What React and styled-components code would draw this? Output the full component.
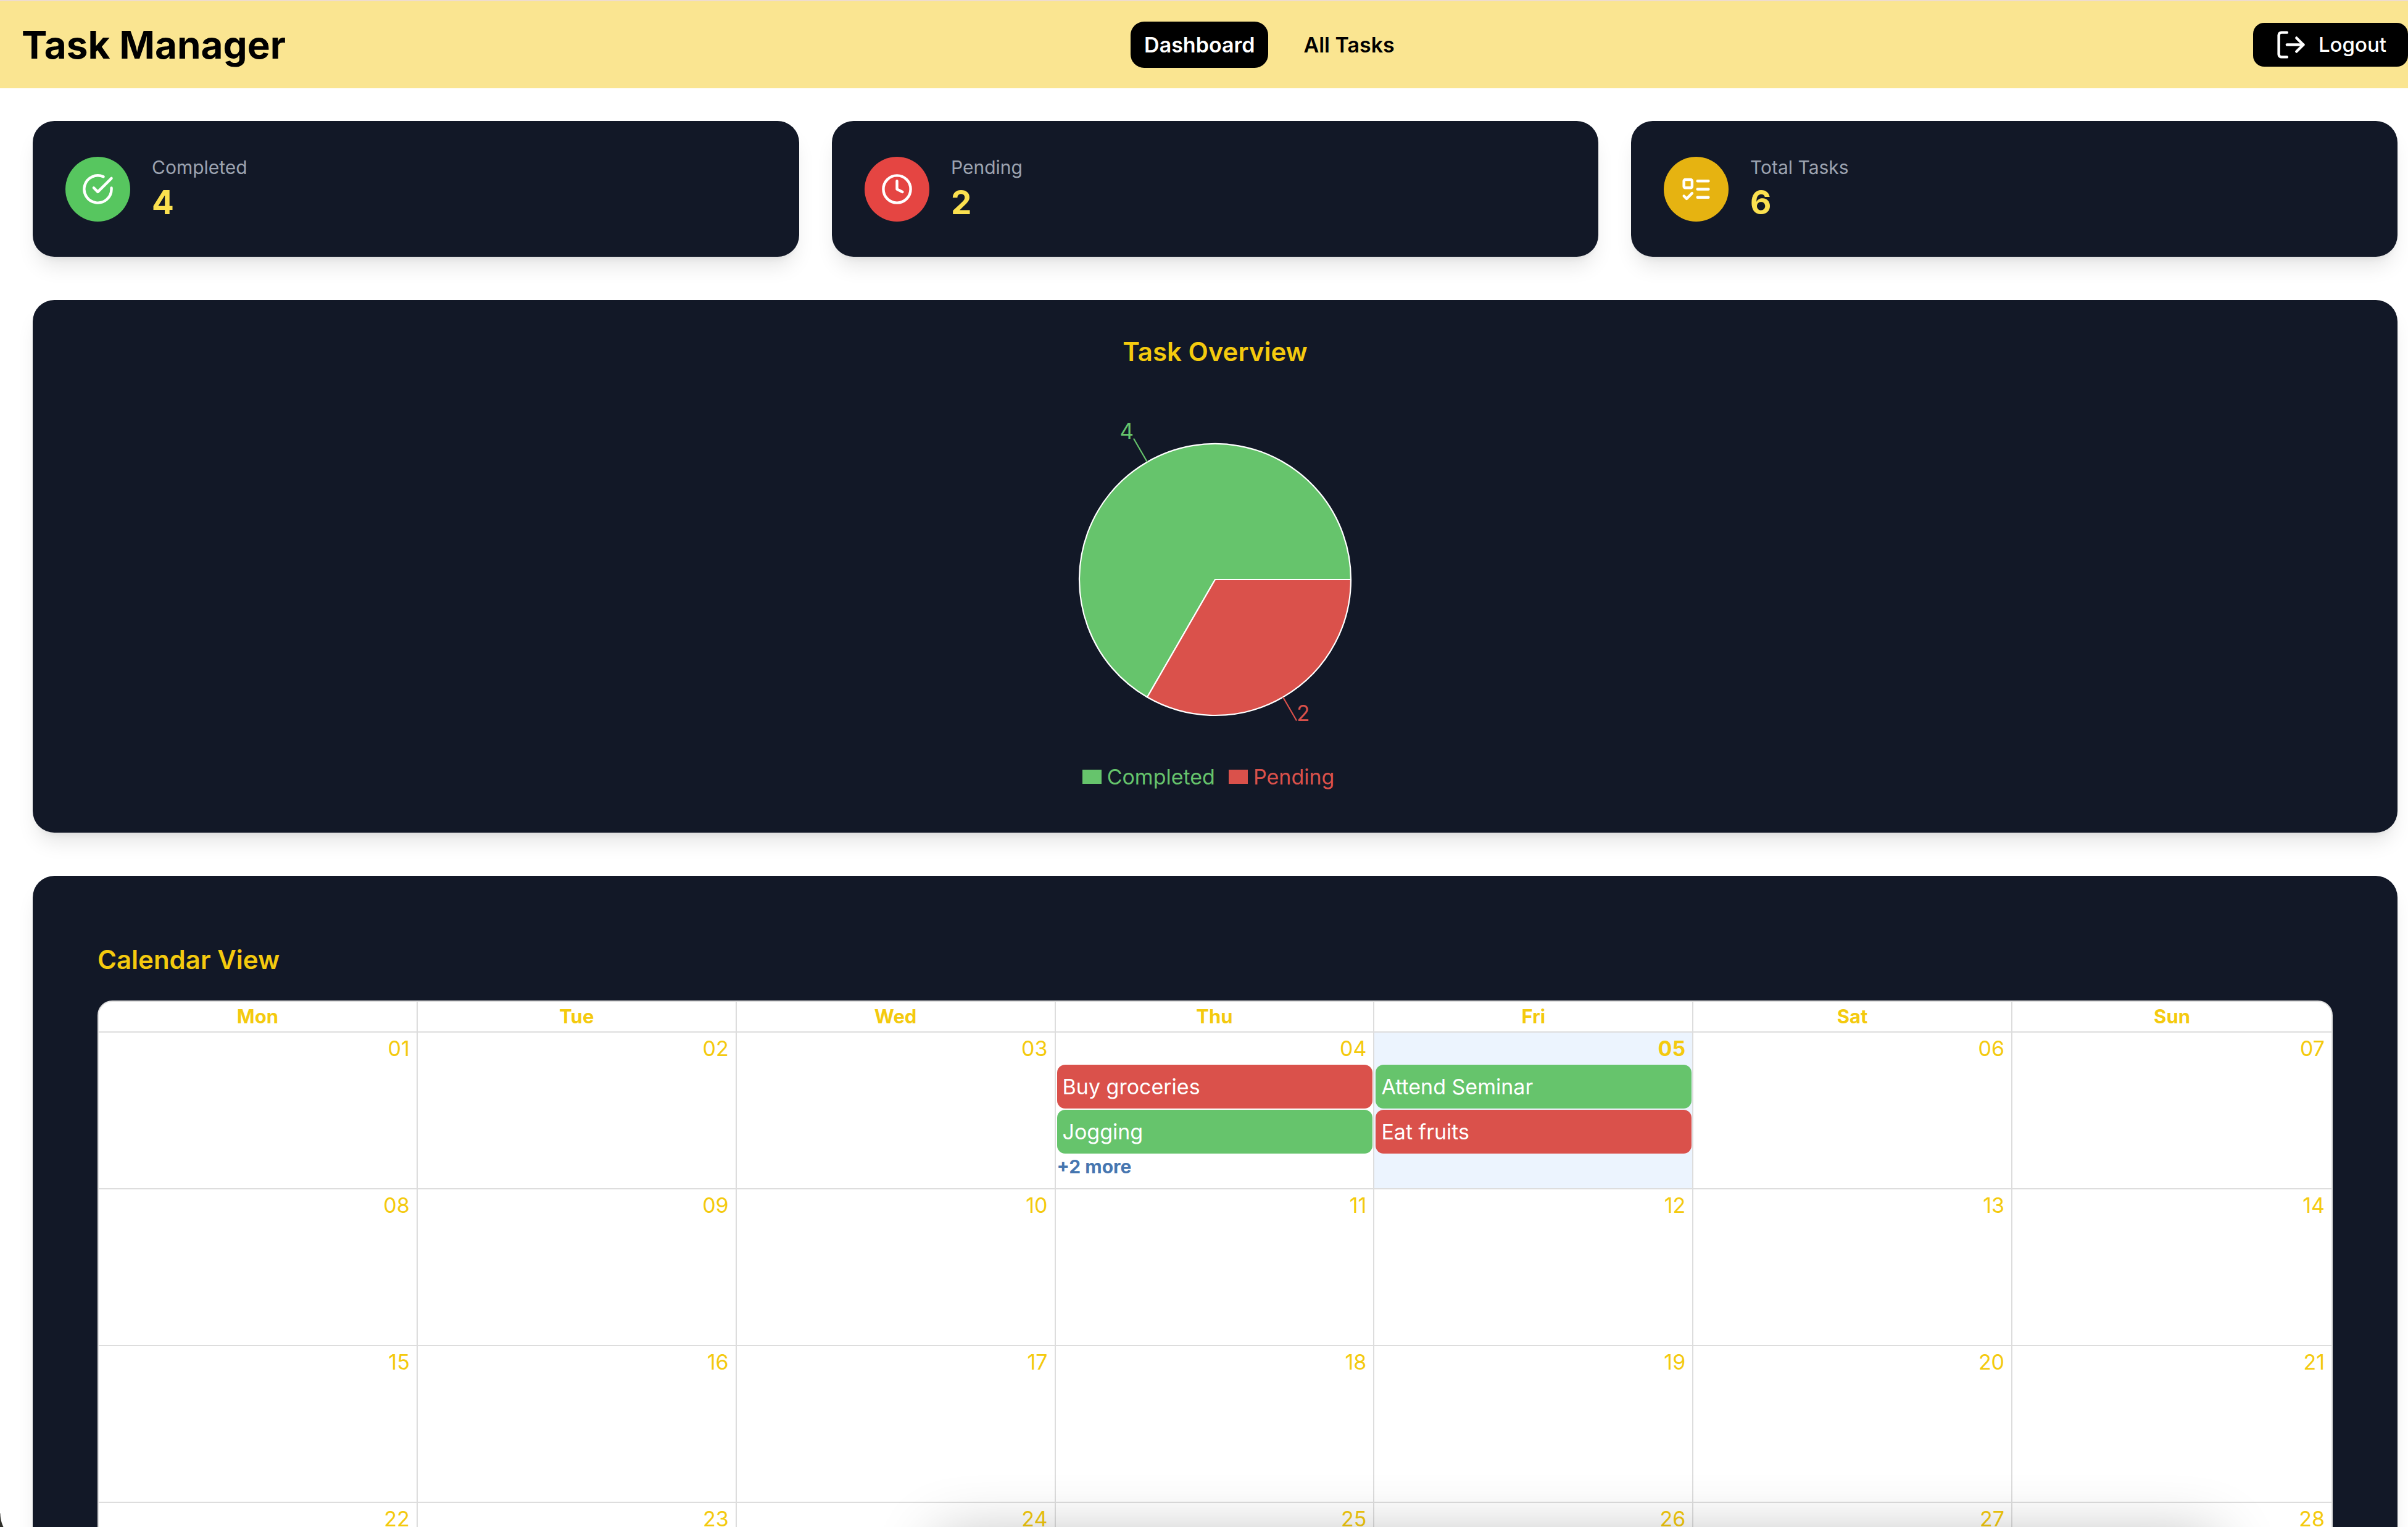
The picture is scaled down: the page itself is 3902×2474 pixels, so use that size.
import React from "react";
import styled, { createGlobalStyle } from "styled-components";

const color = {
  ink: "#121827",
  gold: "#f4ca0e",
  green: "#66c46c",
  red: "#da514b",
  line: "#dddddd",
};

const GlobalStyle = createGlobalStyle`
  *, *::before, *::after { box-sizing: border-box; }
  body {
    margin: 0;
    background: #ffffff;
    font-family: Inter, "Liberation Sans", sans-serif;
    font-size: 34px;
    line-height: 53px;
  }
  button {
    font: inherit;
    border: 0;
    cursor: pointer;
  }
`;

const Page = styled.div`
  position: relative;
  height: 100vh;
  overflow: hidden;
`;

const Header = styled.header`
  display: flex;
  align-items: center;
  justify-content: space-between;
  height: 143px;
  padding-left: 35px;
  border-top: 2px solid #eedccf;
  background: #fae591;
`;

const Brand = styled.h1`
  margin: 0;
  font-size: 62px;
  line-height: 80px;
  font-weight: 700;
  color: #000000;
`;

const Nav = styled.nav`
  display: flex;
  gap: 35px;
`;

const NavLink = styled.a`
  padding: 11px 22px;
  border-radius: 22px;
  font-weight: 600;
  text-decoration: none;
  color: ${(p) => (p.$active ? "#ffffff" : "#000000")};
  background: ${(p) => (p.$active ? "#000000" : "transparent")};
`;

const LogoutButton = styled.button`
  display: flex;
  align-items: center;
  gap: 18px;
  padding: 9px 35px;
  border-radius: 18px;
  font-size: 33px;
  font-weight: 500;
  color: #ffffff;
  background: #000000;
`;

const Icon = styled.svg`
  width: 53px;
  height: 53px;
  flex: none;
  fill: none;
  stroke: #ffffff;
  stroke-width: 2;
  stroke-linecap: round;
  stroke-linejoin: round;
`;

const Main = styled.main`
  display: flex;
  flex-direction: column;
  gap: 70px;
  padding: 53px 17px 53px 53px;
`;

const Card = styled.section`
  border-radius: 35px;
  background: ${color.ink};
  box-shadow: 0 22px 33px -7px rgba(0, 0, 0, 0.1), 0 9px 13px -9px rgba(0, 0, 0, 0.1);
`;

const Stats = styled.div`
  display: grid;
  grid-template-columns: repeat(3, minmax(0, 1fr));
  gap: 53px;
`;

const StatCard = styled(Card)`
  display: flex;
  align-items: center;
  gap: 35px;
  padding: 53px;
`;

const Badge = styled.span`
  display: flex;
  align-items: center;
  justify-content: center;
  width: 105px;
  height: 105px;
  border-radius: 50%;
  background: ${(p) => p.$tone};
`;

const StatLabel = styled.p`
  margin: 0;
  font-size: 30px;
  line-height: 44px;
  color: #9ca3b0;
`;

const StatValue = styled.p`
  margin: 0;
  font-size: 53px;
  line-height: 70px;
  font-weight: 700;
  color: #fbe04f;
`;

const Heading = styled.h2`
  margin: 0 0 35px;
  font-size: 42px;
  line-height: 62px;
  font-weight: 600;
  color: ${color.gold};
`;

const OverviewCard = styled(Card)`
  display: flex;
  flex-direction: column;
  align-items: center;
  padding: 53px 53px 64px;
`;

const Pie = styled.svg`
  display: block;
  width: 660px;
  height: 596px;
  font-size: 35px;
`;

const Legend = styled.ul`
  display: flex;
  margin: 0;
  padding: 0;
  list-style: none;
`;

const LegendItem = styled.li`
  display: flex;
  align-items: center;
  gap: 9px;
  margin-right: 22px;
  color: ${(p) => p.$tone};

  &::before {
    content: "";
    width: 31px;
    height: 23px;
    background: ${(p) => p.$tone};
  }
`;

const CalendarCard = styled(Card)`
  padding: 105px;
`;

const CalendarFrame = styled.div`
  overflow: hidden;
  border: 2px solid ${color.line};
  border-radius: 24px;
  background: #ffffff;
`;

const CalendarTable = styled.table`
  width: 100%;
  table-layout: fixed;
  border-spacing: 0;
  color: ${color.gold};
`;

const DayName = styled.th`
  height: 48px;
  padding: 0;
  font-size: 31px;
  line-height: 44px;
  font-weight: 700;

  &:not(:last-child) {
    border-right: 2px solid ${color.line};
  }
`;

const Day = styled.td`
  height: 254px;
  padding: 0;
  vertical-align: top;
  border-top: 2px solid ${color.line};
  background: ${(p) => (p.$today ? "#ecf4fe" : "transparent")};

  &:not(:last-child) {
    border-right: 2px solid ${color.line};
  }
`;

const DayNumber = styled.div`
  padding-right: 11px;
  line-height: 52px;
  text-align: right;
  font-weight: ${(p) => (p.$today ? 700 : 400)};
`;

const EventList = styled.div`
  display: flex;
  flex-direction: column;
  gap: 2px;
  padding: 0 1px 0 2px;
`;

const EventButton = styled.button`
  height: 71px;
  padding: 0 9px;
  border-radius: 13px;
  text-align: left;
  color: #ffffff;
  background: ${(p) => p.$tone};
`;

const MoreButton = styled.button`
  align-self: flex-start;
  padding: 0;
  font-size: 30px;
  line-height: 38px;
  font-weight: 700;
  color: #4676b0;
  background: transparent;
`;

const DockShadow = styled.div`
  position: absolute;
  left: 39%;
  right: 8%;
  top: 100%;
  height: 100px;
  box-shadow: 0 20px 100px rgba(0, 0, 0, 0.3);
  pointer-events: none;
`;

const WindowCorner = styled.div`
  position: absolute;
  left: 0;
  bottom: -29px;
  width: 51px;
  height: 51px;
  background: radial-gradient(circle at 100% 0, transparent 50px, #2f2f2a 51px);
  pointer-events: none;
`;

const LogoutIcon = () => (
  <Icon viewBox="0 0 24 24" aria-hidden="true">
    <path d="M9 21H5a2 2 0 0 1-2-2V5a2 2 0 0 1 2-2h4" />
    <path d="M16 17l5-5-5-5" />
    <path d="M21 12H9" />
  </Icon>
);

const CheckIcon = () => (
  <Icon viewBox="0 0 24 24" aria-hidden="true">
    <path d="M22 11.08V12a10 10 0 1 1-5.93-9.14" />
    <path d="M9 11l3 3L22 4" />
  </Icon>
);

const ClockIcon = () => (
  <Icon viewBox="0 0 24 24" aria-hidden="true">
    <circle cx="12" cy="12" r="10" />
    <path d="M12 6v6l4 2" />
  </Icon>
);

const ListIcon = () => (
  <Icon viewBox="0 0 24 24" aria-hidden="true">
    <rect x="3" y="5" width="6" height="6" rx="1" />
    <path d="M3 17l2 2 4-4" />
    <path d="M13 6h8" />
    <path d="M13 12h8" />
    <path d="M13 18h8" />
  </Icon>
);

const stats = [
  { label: "Completed", value: 4, tone: "#57c65f", Glyph: CheckIcon },
  { label: "Pending", value: 2, tone: "#e54542", Glyph: ClockIcon },
  { label: "Total Tasks", value: 6, tone: "#e6b311", Glyph: ListIcon },
];

const dayNames = ["Mon", "Tue", "Wed", "Thu", "Fri", "Sat", "Sun"];
const weeks = [0, 1, 2, 3].map((w) => dayNames.map((_, d) => w * 7 + d + 1));
const today = 5;
const events = {
  4: {
    items: [
      { title: "Buy groceries", tone: color.red },
      { title: "Jogging", tone: color.green },
    ],
    more: 2,
  },
  5: {
    items: [
      { title: "Attend Seminar", tone: color.green },
      { title: "Eat fruits", tone: color.red },
    ],
  },
};

const TaskPie = () => (
  <Pie viewBox="0 0 660 596" role="img" aria-label="4 completed, 2 pending">
    <g stroke="#ffffff" strokeWidth="2.2" strokeLinejoin="round">
      <path d="M330 303L550 303A220 220 0 1 0 220 493.5Z" fill={color.green} />
      <path d="M330 303L220 493.5A220 220 0 0 0 550 303Z" fill={color.red} />
    </g>
    <path d="M220 112.5L198 74.5" stroke={color.green} strokeWidth="2.2" />
    <path d="M440 493.5L462 531.5" stroke={color.red} strokeWidth="2.2" />
    <text x="198" y="75" textAnchor="end" fill={color.green}>4</text>
    <text x="462" y="532" fill={color.red}>2</text>
  </Pie>
);

export default function App() {
  return (
    <Page>
      <GlobalStyle />
      <Header>
        <Brand>Task Manager</Brand>
        <Nav>
          <NavLink href="#dashboard" $active aria-current="page">Dashboard</NavLink>
          <NavLink href="#tasks">All Tasks</NavLink>
        </Nav>
        <LogoutButton type="button">
          <LogoutIcon />
          Logout
        </LogoutButton>
      </Header>
      <Main>
        <Stats>
          {stats.map(({ label, value, tone, Glyph }) => (
            <StatCard key={label}>
              <Badge $tone={tone}><Glyph /></Badge>
              <div>
                <StatLabel>{label}</StatLabel>
                <StatValue>{value}</StatValue>
              </div>
            </StatCard>
          ))}
        </Stats>
        <OverviewCard>
          <Heading>Task Overview</Heading>
          <TaskPie />
          <Legend>
            <LegendItem $tone={color.green}>Completed</LegendItem>
            <LegendItem $tone={color.red}>Pending</LegendItem>
          </Legend>
        </OverviewCard>
        <CalendarCard>
          <Heading>Calendar View</Heading>
          <CalendarFrame>
            <CalendarTable>
              <thead>
                <tr>
                  {dayNames.map((name) => (
                    <DayName key={name} scope="col">{name}</DayName>
                  ))}
                </tr>
              </thead>
              <tbody>
                {weeks.map((week) => (
                  <tr key={week[0]}>
                    {week.map((day) => (
                      <Day key={day} $today={day === today}>
                        <DayNumber $today={day === today}>
                          {String(day).padStart(2, "0")}
                        </DayNumber>
                        {events[day] && (
                          <EventList>
                            {events[day].items.map((item) => (
                              <EventButton key={item.title} type="button" $tone={item.tone}>
                                {item.title}
                              </EventButton>
                            ))}
                            {events[day].more && (
                              <MoreButton type="button">+{events[day].more} more</MoreButton>
                            )}
                          </EventList>
                        )}
                      </Day>
                    ))}
                  </tr>
                ))}
              </tbody>
            </CalendarTable>
          </CalendarFrame>
        </CalendarCard>
      </Main>
      <DockShadow />
      <WindowCorner />
    </Page>
  );
}
